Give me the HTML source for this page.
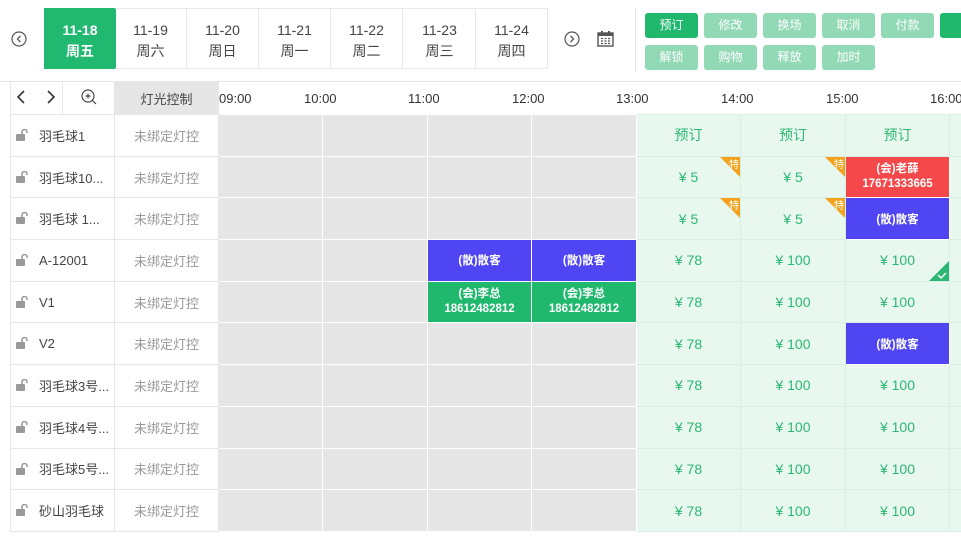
<!DOCTYPE html>
<html><head><meta charset="utf-8">
<style>
*{margin:0;padding:0;box-sizing:border-box}
body{width:961px;height:544px;background:#fff;font-family:"Liberation Sans","Noto Sans CJK SC",sans-serif;position:relative;overflow:hidden;color:#333}
.tab{position:absolute;top:8px;height:61px;width:72px;border:1px solid #e8e8e8;border-left:none;text-align:center;font-size:14px;color:#444;padding-top:11px;line-height:21px}
.tab.on{background:#21b86f;color:#fff;font-weight:bold;border-color:#21b86f}
.btn{position:absolute;width:53px;height:25px;border-radius:3px;background:#92d9b5;color:#fff;font-size:12px;text-align:center;line-height:25px}
.btn.d{background:#1fb86d}
table{position:absolute;left:10px;top:81px;border-collapse:collapse;table-layout:fixed;width:965px}
td{border:1px solid #e6e6e6;height:41.7px;font-size:13px;text-align:center;position:relative;overflow:hidden;white-space:nowrap}
td.n{text-align:left;padding-left:28px;color:#444;font-size:13px}
td.l{color:#999}
td.g{background:#e6e6e6;border-color:#fff}
td.p{background:#e9f8ef;border-color:#d8f0e2;color:#2cb673;font-size:14px}
td.b{background:#4f45f2;color:#fff;font-size:11.5px;font-weight:bold;border-color:#fff}
td.r{background:#f5484b;color:#fff;font-size:11.5px;font-weight:bold;line-height:15px;border-color:#fff}
td.k{background:#1fb86d;color:#fff;font-size:11.5px;font-weight:bold;line-height:15px;border-color:#fff}
.lk{position:absolute;left:5px;top:14px}
.te{position:absolute;right:0;top:0;width:0;height:0;border-top:20px solid #f4a11c;border-left:20px solid transparent}
.te span{position:absolute;right:1px;top:-21px;color:#fff;font-size:10px}
.ck{position:absolute;right:0;bottom:0;width:20px;height:20px}
.hd td{height:33px;border-color:#e6e6e6}
.tl{position:absolute;top:91px;font-size:13px;color:#333}
</style></head><body>
<svg style="position:absolute;left:11px;top:31px" width="16" height="16" viewBox="0 0 16 16"><circle cx="8" cy="8" r="7" fill="none" stroke="#555" stroke-width="1.2"/><path d="M9.5 4.8 6.5 8l3 3.2" fill="none" stroke="#555" stroke-width="1.3"/></svg>
<div class="tab on" style="left:44px;border-left:1px solid #21b86f">11-18<br>周五</div>
<div class="tab" style="left:115px">11-19<br>周六</div>
<div class="tab" style="left:187px">11-20<br>周日</div>
<div class="tab" style="left:259px">11-21<br>周一</div>
<div class="tab" style="left:331px">11-22<br>周二</div>
<div class="tab" style="left:404px">11-23<br>周三</div>
<div class="tab" style="left:476px">11-24<br>周四</div>
<svg style="position:absolute;left:564px;top:31px" width="16" height="16" viewBox="0 0 16 16"><circle cx="8" cy="8" r="7" fill="none" stroke="#555" stroke-width="1.2"/><path d="M6.5 4.8 9.5 8l-3 3.2" fill="none" stroke="#555" stroke-width="1.3"/></svg>
<svg style="position:absolute;left:597px;top:30px" width="17" height="17" viewBox="0 0 17 17"><rect x="1" y="3" width="15" height="13" fill="none" stroke="#555" stroke-width="1.4"/><rect x="1" y="3" width="15" height="3" fill="#555"/><rect x="4" y="1" width="2" height="4" fill="#555"/><rect x="11" y="1" width="2" height="4" fill="#555"/><path d="M4 8.5h2M7.5 8.5h2M11 8.5h2M4 11h2M7.5 11h2M11 11h2M4 13.5h2M7.5 13.5h2M11 13.5h2" stroke="#555" stroke-width="1.3"/></svg>
<div style="position:absolute;left:635px;top:8px;width:1px;height:64px;background:#e6e6e6"></div>
<div class="btn d" style="left:645px;top:13px">预订</div>
<div class="btn" style="left:704px;top:13px">修改</div>
<div class="btn" style="left:763px;top:13px">换场</div>
<div class="btn" style="left:822px;top:13px">取消</div>
<div class="btn" style="left:881px;top:13px">付款</div>
<div class="btn d" style="left:940px;top:13px">锁</div>
<div class="btn" style="left:645px;top:45px">解锁</div>
<div class="btn" style="left:704px;top:45px">购物</div>
<div class="btn" style="left:763px;top:45px">释放</div>
<div class="btn" style="left:822px;top:45px">加时</div>
<div style="position:absolute;left:0;top:81px;width:961px;height:1px;background:#e6e6e6"></div>

<table>
<colgroup><col style="width:52px"><col style="width:52px"><col style="width:104px"><col style="width:104px"><col style="width:105px"><col style="width:104px"><col style="width:105px"><col style="width:104px"><col style="width:105px"><col style="width:104px"><col style="width:26px"></colgroup>
<tr class="hd"><td style="text-align:left;padding-left:5px"><svg width="42" height="16" viewBox="0 0 42 16"><path d="M8 2 2 8l6 6M32 2l6 6-6 6" fill="none" stroke="#333" stroke-width="1.6"/></svg></td><td><svg width="16" height="16" viewBox="0 0 16 16"><circle cx="7" cy="7" r="6" fill="none" stroke="#444" stroke-width="1.2"/><path d="M4.5 7h5M7 4.5v5M11.3 11.3 15 15" stroke="#444" stroke-width="1.2"/></svg></td><td style="background:#e6e6e6;color:#444">灯光控制</td><td style="border:none" colspan="8"></td></tr>
<tr><td class="n" colspan="2"><svg class="lk" width="14" height="12" viewBox="0 0 14 12"><rect x="0" y="5" width="9" height="7" rx="1" fill="#999"/><path d="M6 5V3a2.5 2.5 0 0 1 5 0v1" fill="none" stroke="#999" stroke-width="1.6"/></svg>羽毛球1</td><td class="l">未绑定灯控</td><td class="g"></td><td class="g"></td><td class="g"></td><td class="g"></td><td class="p">预订</td><td class="p">预订</td><td class="p">预订</td><td class="p"></td></tr>
<tr><td class="n" colspan="2"><svg class="lk" width="14" height="12" viewBox="0 0 14 12"><rect x="0" y="5" width="9" height="7" rx="1" fill="#999"/><path d="M6 5V3a2.5 2.5 0 0 1 5 0v1" fill="none" stroke="#999" stroke-width="1.6"/></svg>羽毛球10...</td><td class="l">未绑定灯控</td><td class="g"></td><td class="g"></td><td class="g"></td><td class="g"></td><td class="p">¥ 5<div class="te"><span>特</span></div></td><td class="p">¥ 5<div class="te"><span>特</span></div></td><td class="r">(会)老薛<br>17671333665</td><td class="p"></td></tr>
<tr><td class="n" colspan="2"><svg class="lk" width="14" height="12" viewBox="0 0 14 12"><rect x="0" y="5" width="9" height="7" rx="1" fill="#999"/><path d="M6 5V3a2.5 2.5 0 0 1 5 0v1" fill="none" stroke="#999" stroke-width="1.6"/></svg>羽毛球 1...</td><td class="l">未绑定灯控</td><td class="g"></td><td class="g"></td><td class="g"></td><td class="g"></td><td class="p">¥ 5<div class="te"><span>特</span></div></td><td class="p">¥ 5<div class="te"><span>特</span></div></td><td class="b">(散)散客</td><td class="p"></td></tr>
<tr><td class="n" colspan="2"><svg class="lk" width="14" height="12" viewBox="0 0 14 12"><rect x="0" y="5" width="9" height="7" rx="1" fill="#999"/><path d="M6 5V3a2.5 2.5 0 0 1 5 0v1" fill="none" stroke="#999" stroke-width="1.6"/></svg>A-12001</td><td class="l">未绑定灯控</td><td class="g"></td><td class="g"></td><td class="b">(散)散客</td><td class="b">(散)散客</td><td class="p">¥ 78</td><td class="p">¥ 100</td><td class="p">¥ 100<svg class="ck" viewBox="0 0 20 20"><path d="M20 0V20H0Z" fill="#2bb771"/><path d="M9 14l3 3 5-5" fill="none" stroke="#fff" stroke-width="1.5"/></svg></td><td class="p"></td></tr>
<tr><td class="n" colspan="2"><svg class="lk" width="14" height="12" viewBox="0 0 14 12"><rect x="0" y="5" width="9" height="7" rx="1" fill="#999"/><path d="M6 5V3a2.5 2.5 0 0 1 5 0v1" fill="none" stroke="#999" stroke-width="1.6"/></svg>V1</td><td class="l">未绑定灯控</td><td class="g"></td><td class="g"></td><td class="k">(会)李总<br>18612482812</td><td class="k">(会)李总<br>18612482812</td><td class="p">¥ 78</td><td class="p">¥ 100</td><td class="p">¥ 100</td><td class="p"></td></tr>
<tr><td class="n" colspan="2"><svg class="lk" width="14" height="12" viewBox="0 0 14 12"><rect x="0" y="5" width="9" height="7" rx="1" fill="#999"/><path d="M6 5V3a2.5 2.5 0 0 1 5 0v1" fill="none" stroke="#999" stroke-width="1.6"/></svg>V2</td><td class="l">未绑定灯控</td><td class="g"></td><td class="g"></td><td class="g"></td><td class="g"></td><td class="p">¥ 78</td><td class="p">¥ 100</td><td class="b">(散)散客</td><td class="p"></td></tr>
<tr><td class="n" colspan="2"><svg class="lk" width="14" height="12" viewBox="0 0 14 12"><rect x="0" y="5" width="9" height="7" rx="1" fill="#999"/><path d="M6 5V3a2.5 2.5 0 0 1 5 0v1" fill="none" stroke="#999" stroke-width="1.6"/></svg>羽毛球3号...</td><td class="l">未绑定灯控</td><td class="g"></td><td class="g"></td><td class="g"></td><td class="g"></td><td class="p">¥ 78</td><td class="p">¥ 100</td><td class="p">¥ 100</td><td class="p"></td></tr>
<tr><td class="n" colspan="2"><svg class="lk" width="14" height="12" viewBox="0 0 14 12"><rect x="0" y="5" width="9" height="7" rx="1" fill="#999"/><path d="M6 5V3a2.5 2.5 0 0 1 5 0v1" fill="none" stroke="#999" stroke-width="1.6"/></svg>羽毛球4号...</td><td class="l">未绑定灯控</td><td class="g"></td><td class="g"></td><td class="g"></td><td class="g"></td><td class="p">¥ 78</td><td class="p">¥ 100</td><td class="p">¥ 100</td><td class="p"></td></tr>
<tr><td class="n" colspan="2"><svg class="lk" width="14" height="12" viewBox="0 0 14 12"><rect x="0" y="5" width="9" height="7" rx="1" fill="#999"/><path d="M6 5V3a2.5 2.5 0 0 1 5 0v1" fill="none" stroke="#999" stroke-width="1.6"/></svg>羽毛球5号...</td><td class="l">未绑定灯控</td><td class="g"></td><td class="g"></td><td class="g"></td><td class="g"></td><td class="p">¥ 78</td><td class="p">¥ 100</td><td class="p">¥ 100</td><td class="p"></td></tr>
<tr><td class="n" colspan="2"><svg class="lk" width="14" height="12" viewBox="0 0 14 12"><rect x="0" y="5" width="9" height="7" rx="1" fill="#999"/><path d="M6 5V3a2.5 2.5 0 0 1 5 0v1" fill="none" stroke="#999" stroke-width="1.6"/></svg>砂山羽毛球</td><td class="l">未绑定灯控</td><td class="g"></td><td class="g"></td><td class="g"></td><td class="g"></td><td class="p">¥ 78</td><td class="p">¥ 100</td><td class="p">¥ 100</td><td class="p"></td></tr>
</table>
<div class="tl" style="left:219px">09:00</div>
<div class="tl" style="left:304px">10:00</div>
<div class="tl" style="left:408px">11:00</div>
<div class="tl" style="left:512px">12:00</div>
<div class="tl" style="left:616px">13:00</div>
<div class="tl" style="left:721px">14:00</div>
<div class="tl" style="left:826px">15:00</div>
<div class="tl" style="left:930px">16:00</div>
</body></html>
